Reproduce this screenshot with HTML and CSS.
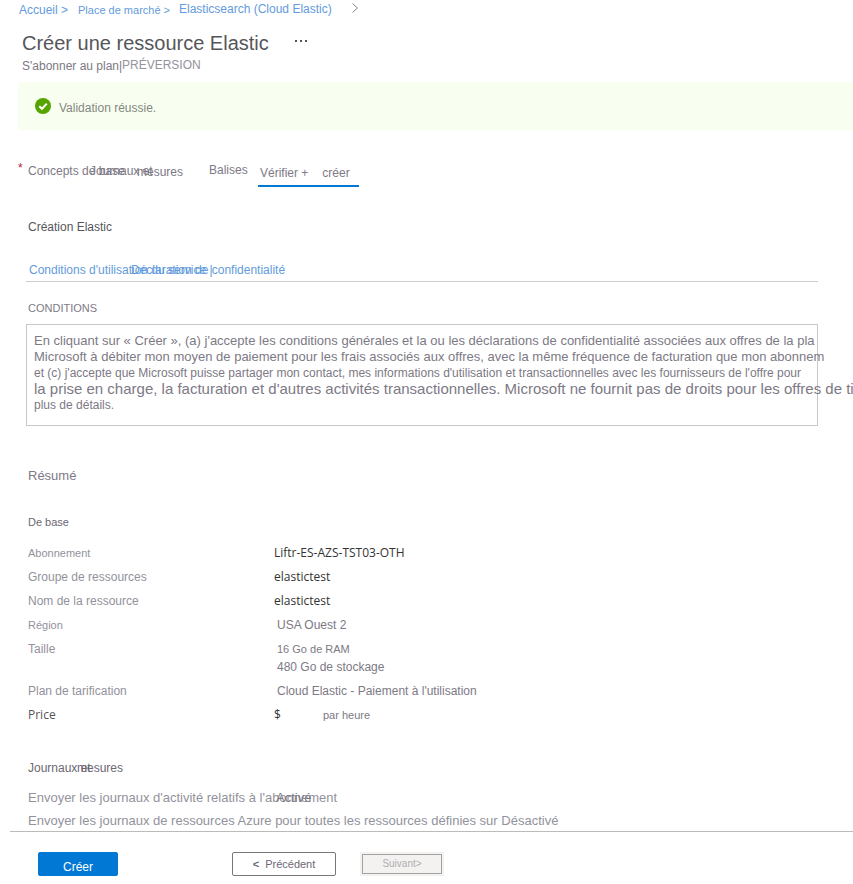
FILE: index.html
```html
<!DOCTYPE html>
<html lang="fr">
<head>
<meta charset="utf-8">
<meta name="viewport" content="width=device-width, initial-scale=1">
<title>Créer une ressource Elastic</title>
<link rel="stylesheet" href="styles.css">
</head>
<body>
<nav class="crumbs" aria-label="Navigation">
  <a class="crumb-home" href="#">Accueil &gt;</a>
  <a class="crumb-market small" href="#">Place de marché &gt;</a>
  <a class="crumb-product" href="#">Elasticsearch (Cloud Elastic)</a>
  <svg class="chevron" viewBox="0 0 6 10" aria-hidden="true"><path d="M.5 .5 5.5 5 .5 9.5"/></svg>
</nav>
<header class="head">
  <div class="title-row">
    <h1>Créer une ressource Elastic</h1>
    <button class="more" type="button" aria-label="Plus">
      <svg viewBox="0 0 12 2" aria-hidden="true"><path d="M0 0h2v2H0zM5 0h2v2H5zM10 0h2v2h-2z"/></svg>
    </button>
  </div>
  <p class="subtitle"><span class="plan">S'abonner au plan|</span><span class="preview">PRÉVERSION</span></p>
</header>
<div class="banner" role="status">
  <svg class="check" viewBox="0 0 16 16" aria-hidden="true"><circle cx="8" cy="8" r="8"/><path d="M4.3 8.2 7 10.8 11.8 5.6"/></svg>
  <span>Validation réussie.</span>
</div>
<main class="content">
  <nav class="tabs" aria-label="Étapes">
    <span class="required">*</span>
    <a class="tab tab-basics" href="#">Concepts de base</a>
    <a class="tab tab-logs" href="#">Journaux et</a>
    <a class="tab tab-metrics" href="#">mesures</a>
    <a class="tab tab-tags" href="#">Balises</a>
    <a class="tab tab-review" href="#" aria-current="step"><span>Vérifier +</span><span>créer</span></a>
  </nav>
  <h2 class="product">Création Elastic</h2>
  <div class="links">
    <a class="terms-link" href="#">Conditions d'utilisation du service |</a>
    <a href="#">Déclaration de confidentialité</a>
  </div>
  <h3 class="terms-title small">CONDITIONS</h3>
  <div class="terms">
    <p class="wide">En cliquant sur « Créer », (a) j'accepte les conditions générales et la ou les déclarations de confidentialité associées aux offres de la pla</p>
    <p class="wide">Microsoft à débiter mon moyen de paiement pour les frais associés aux offres, avec la même fréquence de facturation que mon abonnem</p>
    <p>et (c) j'accepte que Microsoft puisse partager mon contact, mes informations d'utilisation et transactionnelles avec les fournisseurs de l'offre pour</p>
    <p class="large">la prise en charge, la facturation et d'autres activités transactionnelles. Microsoft ne fournit pas de droits pour les offres de tie</p>
    <p>plus de détails.</p>
  </div>
  <h2 class="summary">Résumé</h2>
  <h3 class="group small">De base</h3>
  <dl class="facts">
    <dt class="small">Abonnement</dt><dd class="value">Liftr-ES-AZS-TST03-OTH</dd>
    <dt>Groupe de ressources</dt><dd class="value">elastictest</dd>
    <dt>Nom de la ressource</dt><dd class="value">elastictest</dd>
    <dt class="small">Région</dt><dd>USA Ouest 2</dd>
    <dt>Taille</dt><dd><div class="small">16 Go de RAM</div><div class="storage">480 Go de stockage</div></dd>
    <dt>Plan de tarification</dt><dd>Cloud Elastic - Paiement à l'utilisation</dd>
    <dt class="value">Price</dt><dd class="price"><span class="value">$</span><span class="small">par heure</span></dd>
  </dl>
  <h3 class="group logs-title"><span class="logs-word">Journaux et</span><span>mesures</span></h3>
  <div class="log-row"><span class="log-label">Envoyer les journaux d'activité relatifs à l'abonnement</span><span class="enabled">Activé</span></div>
  <div class="log-row">Envoyer les journaux de ressources Azure pour toutes les ressources définies sur Désactivé</div>
</main>
<footer class="actions">
  <button class="btn create" type="button">Créer</button>
  <button class="btn previous" type="button"><b>&lt;</b><span>Précédent</span></button>
  <button class="btn next" type="button" disabled>Suivant&gt;</button>
</footer>
</body>
</html>
```
FILE: styles.css
```css
* { box-sizing: border-box; }
body {
  margin: 0;
  overflow-x: hidden;
  background: #fff;
  color: #7d7985;
  font: 12px/16px "Liberation Sans", Arial, sans-serif;
}
h1, h2, h3, p, dl, dd { margin: 0; font-weight: 400; }
a { color: #639bdc; text-decoration: none; white-space: nowrap; }
button { font: inherit; }
.small { font-size: 11px; }

.crumbs { display: flex; height: 20px; padding-left: 19px; }
.crumb-home { flex: 0 0 59px; padding-top: 2px; }
.crumb-market { flex: 0 0 101px; padding-top: 2px; }
.crumb-product { padding-top: 1px; }
.chevron { width: 6px; height: 10px; margin: 3px 0 0 20px; fill: none; stroke: #888; }

.head { height: 62px; padding: 11px 0 0 22px; }
.title-row { display: flex; }
h1 { color: #56565a; font-size: 20px; line-height: 24px; }
.more { height: 20px; margin-left: 22px; padding: 0 4px; border: 0; background: none; }
.more svg { display: block; width: 12px; height: 2px; fill: #555; }
.subtitle { display: flex; height: 20px; white-space: nowrap; }
.plan { flex: none; width: 100px; padding-top: 3px; }
.preview { padding-top: 2px; color: #96929c; }

.banner { display: flex; align-items: center; gap: 8px; height: 48px; margin-left: 18px; padding-left: 17px; background: #f8fff0; color: #858782; }
.banner span { padding-top: 3px; }
.check { width: 16px; height: 16px; }
.check circle { fill: #57a300; }
.check path { fill: none; stroke: #fff; stroke-width: 2; }

.content { padding-left: 28px; }
.tabs { display: flex; height: 57px; padding-top: 30px; }
.required { width: 10px; margin-left: -10px; color: #b02040; }
.tab { flex: none; color: #7d7985; }
.tab-basics { width: 62px; padding-top: 3px; }
.tab-logs { width: 47px; padding-top: 3px; }
.tab-metrics { width: 72px; padding-top: 4px; }
.tab-tags { width: 49px; padding-top: 2px; }
.tab-review { display: flex; gap: 14px; width: 101px; padding: 5px 2px 0; border-bottom: 2px solid #0078d4; }
.product { margin-top: 32px; color: #56565a; font-size: 12px; }
.links { display: flex; height: 47px; margin: 0 35px 0 -2px; padding: 27px 0 0 3px; border-bottom: 1px solid #ccc; }
.terms-link { flex: none; width: 102px; }
.terms-title { margin-top: 18px; }
.terms { height: 102px; margin: 8px 35px 0 -2px; padding: 8px 7px; border: 1px solid #c8c8c8; white-space: nowrap; }
.terms .wide { font-size: 13px; }
.terms .large { font-size: 15px; }

.summary { margin-top: 42px; font-size: 13px; }
.group { margin-top: 30px; color: #6c6872; }
.facts { display: grid; grid-template-columns: 246px 1fr; row-gap: 8px; margin-top: 15px; }
.facts dt { color: #92929c; }
.facts dd { padding-left: 3px; }
.facts .value { padding-left: 0; color: #333; font-family: "Open Sans", "Noto Sans", sans-serif; font-size: 12px; }
.facts dt.value { color: #555; }
.storage { padding-top: 2px; }
.facts .price { display: flex; padding-left: 0; }
.price .value { width: 49px; }
.logs-title { display: flex; margin-top: 37px; font-size: 12px; }
.logs-word { flex: none; width: 49px; white-space: nowrap; }
.log-row { display: flex; height: 16px; margin-top: 14px; color: #92929c; font-size: 13px; white-space: nowrap; }
.log-row + .log-row { margin-top: 7px; }
.log-label { flex: none; width: 248px; }
.enabled { color: #7d7985; }

.actions { display: flex; height: 52px; margin: 2px 0 0 10px; padding: 20px 0 0 28px; border-top: 1px solid #bbb; }
.btn { height: 24px; padding: 0; border: 1px solid #777; border-radius: 2px; background: #fff; }
.create { width: 80px; padding-top: 6px; border-color: #0078d4; background: #0078d4; color: #fff; }
.previous { display: flex; align-items: center; justify-content: center; gap: 6px; width: 104px; margin-left: 114px; color: #6c6872; font-size: 11px; }
.next { width: 80px; height: 20px; margin: 2px 0 0 26px; border-color: #a3a19f; border-radius: 0; outline: 2px solid #f3f2f1; background: #f3f2f1; color: #b0aeb0; font-size: 10px; }
```
